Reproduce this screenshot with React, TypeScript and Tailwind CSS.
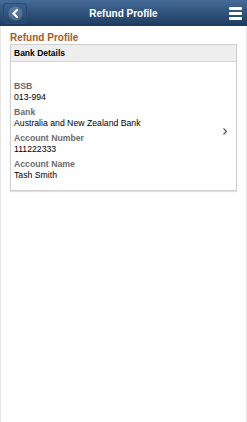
import React from 'react';

const fields = [
  { label: 'BSB', value: '013-994' },
  { label: 'Bank', value: 'Australia and New Zealand Bank' },
  { label: 'Account Number', value: '111222333' },
  { label: 'Account Name', value: 'Tash Smith' },
];

const App: React.FC = () => {
  return (
    <div className="h-[422px] w-[247px] overflow-hidden bg-white font-['Liberation_Sans',Arial,sans-serif]">
      <div className="flex h-[26px] items-center justify-between bg-gradient-to-b from-[#456b98] to-[#1d3b5f] px-[3px]">
        <button className="flex h-[21px] w-[24px] items-center justify-center rounded-[3px] border border-[#2a4a70] bg-gradient-to-b from-[#3a6291] to-[#24466d]">
          <svg width="15" height="15" viewBox="0 0 16 16">
            <circle cx="8" cy="8" r="7.5" fill="#ffffff" fillOpacity="0.18" />
            <path d="M9.6 4.2 L5.8 8 L9.6 11.8" fill="none" stroke="#ffffff" strokeWidth="2.4" strokeLinecap="round" strokeLinejoin="round" />
          </svg>
        </button>
        <div className="text-[10px] font-bold text-white">Refund Profile</div>
        <div className="flex w-[24px] flex-col items-end gap-[2px] pr-[2px]">
          <span className="h-[3px] w-[13px] rounded-[1px] bg-white" />
          <span className="h-[3px] w-[13px] rounded-[1px] bg-white" />
          <span className="h-[3px] w-[13px] rounded-[1px] bg-white" />
        </div>
      </div>
      <div className="h-[396px] border-x border-[#e6e6e6] px-[9px] pt-[5px]">
        <div className="text-[10px] font-bold leading-[13px] text-[#a85b1e]">Refund Profile</div>
        <div className="border border-[#cfcfcf] shadow-[0_1px_1px_rgba(0,0,0,0.12)]">
          <div className="flex h-[17px] items-center border-b border-[#d6d6d6] bg-[#eeeeee] px-[3px] text-[8.5px] font-bold text-black">
            Bank Details
          </div>
          <div className="flex items-center justify-between pb-[9px] pl-[3px] pr-[8px] pt-[19px]">
            <div className="flex flex-col gap-[4px] text-[8.7px] leading-[11px]">
              {fields.map(f => (
                <div key={f.label}>
                  <div className="font-bold text-[#6b6b6b]">{f.label}</div>
                  <div className="text-black">{f.value}</div>
                </div>
              ))}
            </div>
            <svg width="6" height="9" viewBox="0 0 6 9">
              <path d="M1.5 1.5 L4.5 4.5 L1.5 7.5" fill="none" stroke="#555555" strokeWidth="1.2" />
            </svg>
          </div>
        </div>
      </div>
    </div>
  );
};

export default App;
